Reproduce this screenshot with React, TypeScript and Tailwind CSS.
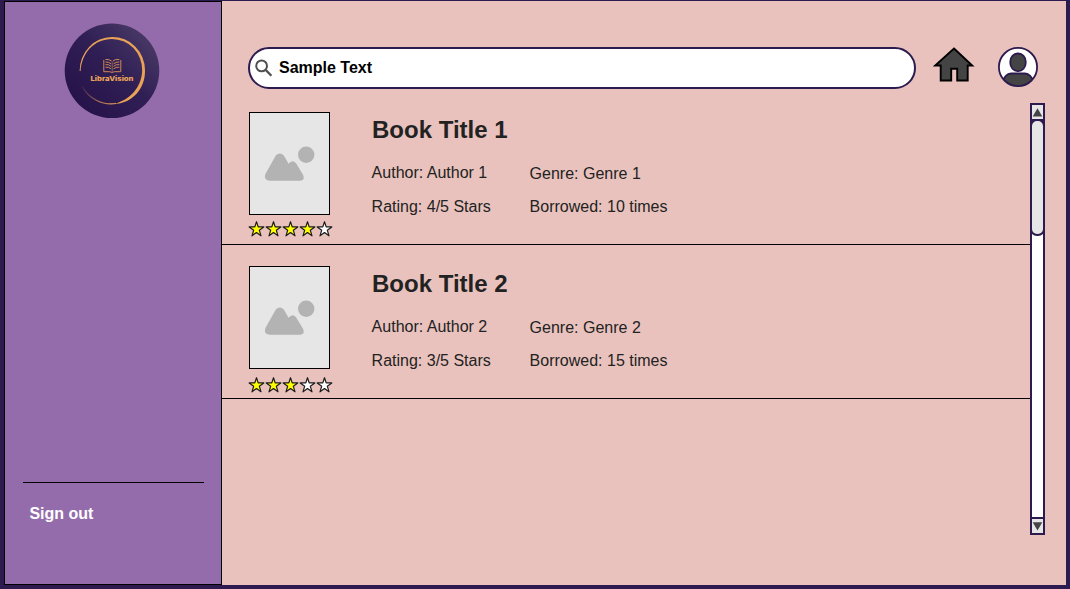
const STAR = "M7.5 0.7 L9.2 5.9 L14.8 5.9 L10.3 9.2 L12 14.8 L7.5 11.5 L3 14.8 L4.7 9.2 L0.2 5.9 L5.8 5.9 Z";

type Book = { id: number; genre: string; author: string; stars: number; borrowed: number; starGap: string };

const books: Book[] = [
  { id: 1, author: "Author 1", genre: "Genre 1", stars: 4, borrowed: 10, starGap: "mt-[6px]" },
  { id: 2, author: "Author 2", genre: "Genre 2", stars: 3, borrowed: 15, starGap: "mt-[8px]" },
];

function Logo() {
  return (
    <svg width="96" height="96" viewBox="0 0 96 96" className="block">
      <defs>
        <linearGradient id="disc" x1="0.15" y1="0.85" x2="0.85" y2="0.15">
          <stop offset="0" stopColor="#26134a" />
          <stop offset="0.55" stopColor="#301f54" />
          <stop offset="1" stopColor="#463765" />
        </linearGradient>
        <linearGradient id="fade" gradientUnits="userSpaceOnUse" x1="50" y1="80" x2="16" y2="62">
          <stop offset="0" stopColor="#e59a55" />
          <stop offset="0.8" stopColor="#e59a55" stopOpacity="0.25" />
          <stop offset="1" stopColor="#e59a55" stopOpacity="0" />
        </linearGradient>
      </defs>
      <circle cx="48" cy="47.7" r="47.3" fill="url(#disc)" />
      <path d="M15.6 48 A32.4 34 0 0 1 48 14 A32.5 33.4 0 0 1 81 47 C81.5 66 68 80.5 50 81 C66 77 78 64 78.2 47 A30.5 31 0 0 0 48 15.9 C30 16 17.6 30 16.6 48 Z" fill="#e9a257" />
      <path d="M18 63 A33 33 0 0 0 52 80.5" fill="none" stroke="url(#fade)" strokeWidth="1.1" />
      <g fill="none" stroke="#d98e57" strokeWidth="0.95">
        <path d="M39.8 37 V48.7 H45.5 L48 49.4 L50.5 48.7 H56.8 V37" />
        <path d="M48.2 38.5 V48.5" strokeWidth="0.6" />
        <path d="M41.5 36.5 Q45 36 47.5 38 M49 38 Q51 36 55.3 36.5 M41.5 39 Q45 38.8 47 40.8 M49.5 40.8 Q52 38.8 55.3 39 M41.5 41.6 Q45 41.2 47 43.3 M49.5 43.3 Q52 41.2 55.3 41.6 M41.5 44.2 Q45 43.8 47 45.8 M49.5 45.8 Q52 43.8 55.3 44.2" />
      </g>
      <text x="26.5" y="58" textLength="43" lengthAdjust="spacingAndGlyphs" fontFamily="Inter, sans-serif" fontSize="6.7" fontWeight="800" fill="#eda55b">
        LibraVision
      </text>
    </svg>
  );
}

function Cover() {
  return (
    <div className="h-[103px] w-[81px] border border-black bg-[#e6e6e6]">
      <svg width="79" height="101" viewBox="0 0 79 101" className="block" fill="#b3b3b3">
        <circle cx="56.2" cy="41.7" r="8.2" />
        <path d="M25.8 42.6 Q29.8 38.2 33.8 42.6 L38.6 50.7 Q42.5 45.8 46.2 50.5 L53 61.8 Q55.4 67.2 50.5 67.7 H19.5 Q13.4 67 15.4 61 Z" />
      </svg>
    </div>
  );
}

function Stars({ count }: { count: number }) {
  return (
    <div className="flex gap-[2px]">
      {[0, 1, 2, 3, 4].map((i) => (
        <svg key={i} width="15" height="16" viewBox="0 0 15 16" className="block overflow-visible">
          <path d={STAR} fill={i < count ? "#ffff00" : "#ffffff"} stroke="#1c1c1c" strokeWidth="1.2" strokeLinejoin="round" />
        </svg>
      ))}
    </div>
  );
}

function BookRow({ book }: { book: Book }) {
  return (
    <li className="flex h-[154px] border-b border-black pl-[27px] pt-[21px]">
      <div className="w-[123px] shrink-0">
        <Cover />
        <div className={book.starGap}>
          <Stars count={book.stars} />
        </div>
      </div>
      <div className="text-[#222222]">
        <h2 className="mt-[2px] text-2xl leading-8 font-bold">Book Title {book.id}</h2>
        <div className="mt-[15px] -ml-[0.4px] grid grid-cols-[158px_200px] gap-y-[10px] text-base leading-6">
          <span>Author: {book.author}</span>
          <span className="pt-px leading-6">Genre: {book.genre}</span>
          <span className="-mt-px">Rating: {book.stars}/5 Stars</span>
          <span className="-mt-px">Borrowed: {book.borrowed} times</span>
        </div>
      </div>
    </li>
  );
}

function ScrollBar() {
  return (
    <div className="flex h-[432px] w-[15px] flex-col border-2 border-[#2d1a4f] bg-white">
      <div className="flex h-[14px] shrink-0 items-center justify-center bg-[#e6e6e6]">
        <svg width="11" height="9" viewBox="0 0 11 9">
          <path d="M5.5 0.3 L10.3 8.5 H0.7 Z" fill="#444444" />
        </svg>
      </div>
      <div className="h-[117px] shrink-0 bg-[linear-gradient(#2d1a4f_50%,#ffffff_50%)]">
        <div className="-mx-[2px] h-full rounded-[7px] border-2 border-[#2d1a4f] bg-[#e6e6e6]" />
      </div>
      <div className="grow" />
      <div className="flex h-[16px] shrink-0 items-center justify-center border-t-2 border-[#2d1a4f] bg-[#e6e6e6]">
        <svg width="11" height="9" viewBox="0 0 11 9">
          <path d="M5.5 8.5 L10.3 0.3 H0.7 Z" fill="#444444" />
        </svg>
      </div>
    </div>
  );
}

function Header() {
  return (
    <header className="flex pl-[26px] pt-[46px]">
      <div className="flex h-[42px] w-[668px] items-center rounded-full border-2 border-[#2d1a4f] bg-white pl-[5px]">
        <svg width="18" height="18" viewBox="0 0 18 18" fill="none" stroke="#505050" strokeWidth="2">
          <circle cx="6.6" cy="6.9" r="5.4" />
          <path d="M10.6 10.9 L16.4 16.7" strokeWidth="2.3" />
        </svg>
        <span className="ml-[6px] text-base leading-6 font-bold text-black">Sample Text</span>
      </div>
      <svg width="44" height="37" viewBox="0 0 44 37" className="ml-[16px] block">
        <path d="M22 1.5 L40.2 18.5 H35.7 V33.5 H25.2 V21.7 H19.2 V33.5 H8.7 V18.5 H3.2 Z" fill="#444444" stroke="#000000" strokeWidth="1.9" />
      </svg>
      <svg width="40" height="40" viewBox="0 0 40 40" className="ml-[22px] block">
        <defs>
          <clipPath id="avatar">
            <circle cx="20" cy="20" r="19" />
          </clipPath>
        </defs>
        <circle cx="20" cy="20" r="19" fill="#ffffff" />
        <g clipPath="url(#avatar)" fill="#444444" stroke="#2d1a4f" strokeWidth="1.8">
          <path d="M4 42 V36 Q7 26.7 13 26.5 H27 Q33 26.7 36 36 V42 Z" />
          <rect x="12.3" y="6.5" width="15.4" height="17.6" rx="7.4" ry="8" />
        </g>
        <circle cx="20" cy="20" r="19.1" fill="none" stroke="#2d1a4f" strokeWidth="1.8" />
      </svg>
    </header>
  );
}

export default function App() {
  return (
    <div className="flex h-[589px] w-[1070px] bg-[#2d1a4f] pl-1 pt-px font-['Liberation_Sans',Arial,sans-serif]">
      <aside className="flex h-[584px] w-[218px] shrink-0 flex-col border border-black bg-[#956cab]">
        <div className="ml-[59px] mt-[21px]">
          <Logo />
        </div>
        <hr className="ml-[18px] mt-[363px] w-[181px] border-t border-black" />
        <a className="ml-[24.4px] mt-[19px] text-base leading-6 font-bold text-white">Sign out</a>
      </aside>
      <main className="h-[584px] w-[844px] bg-[#e9c2bd]">
        <Header />
        <div className="mt-[2px] flex">
          <ul className="w-[808px] shrink-0">
            {books.map((book) => (
              <BookRow key={book.id} book={book} />
            ))}
          </ul>
          <div className="mt-[12px]">
            <ScrollBar />
          </div>
        </div>
      </main>
    </div>
  );
}
